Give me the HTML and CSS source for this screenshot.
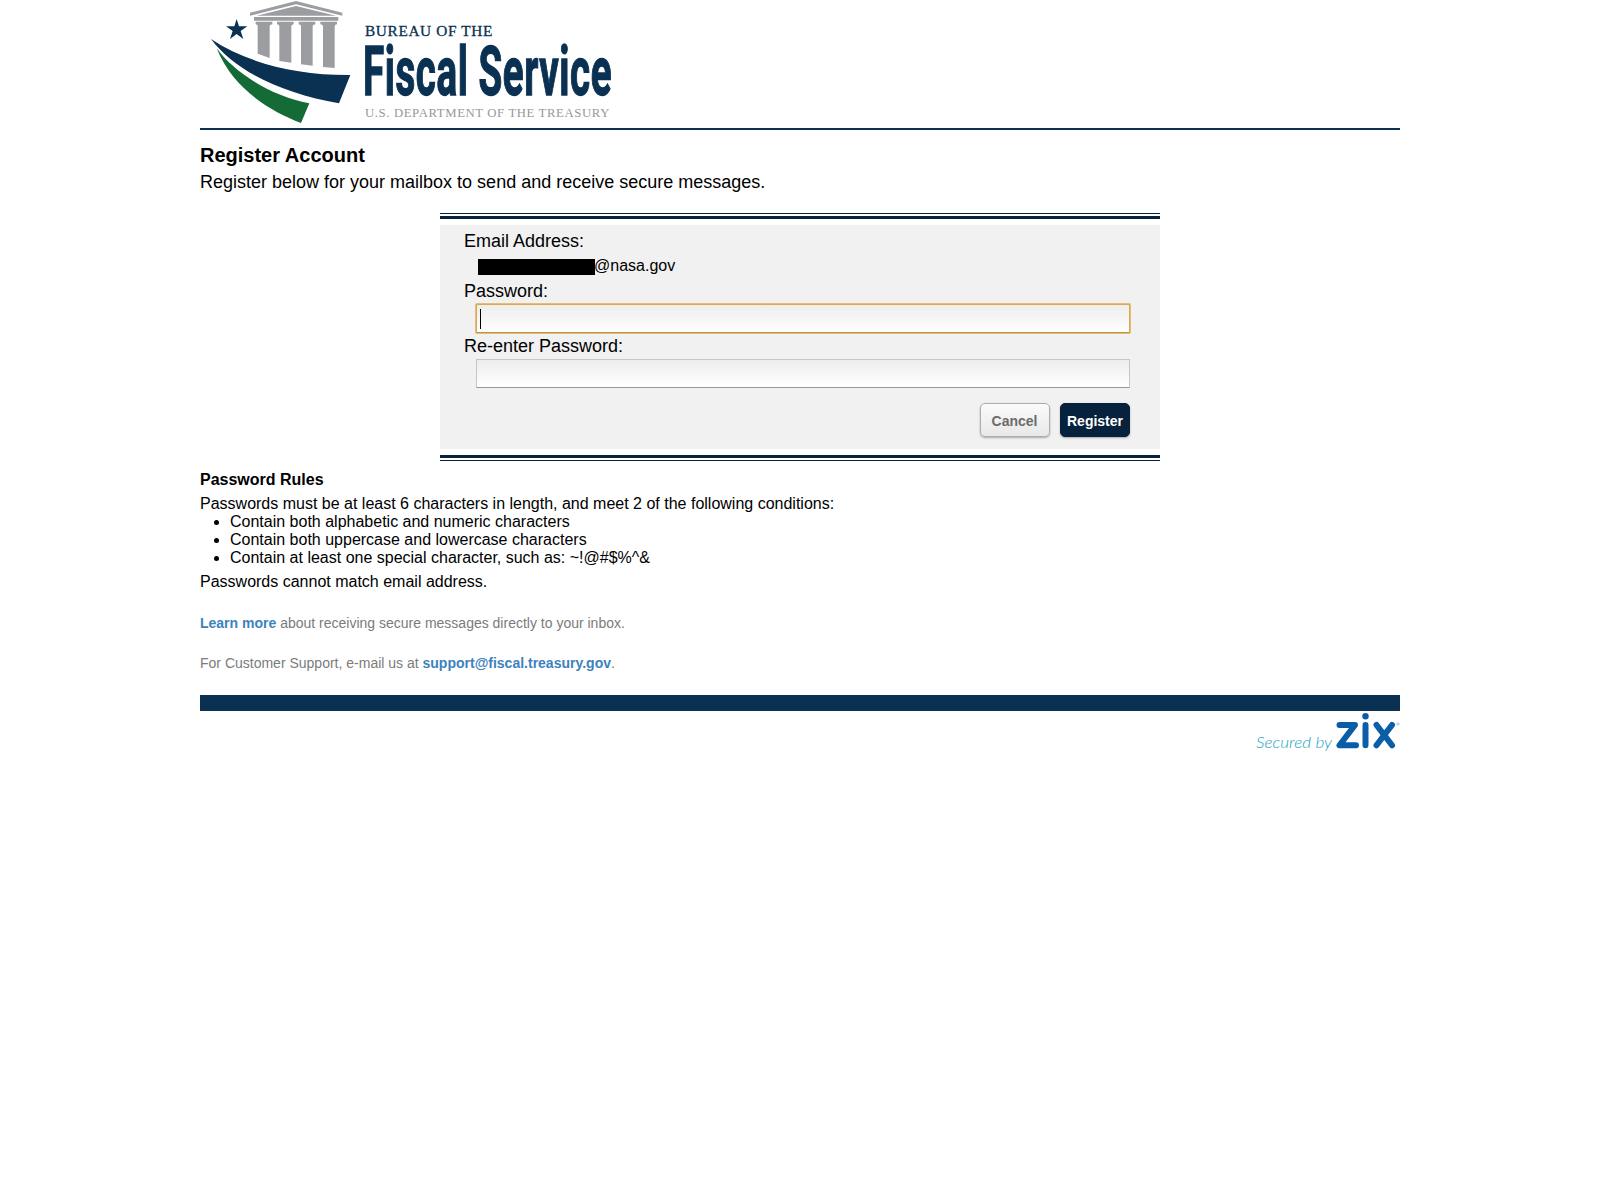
FILE: index.html
```html
<!DOCTYPE html>
<html lang="en">
<head>
<meta charset="utf-8">
<title>Register Account</title>
<link rel="stylesheet" href="styles.css">
</head>
<body>
<div class="page">
  <header class="header">
    <svg class="logo" width="420" height="128" viewBox="0 0 420 128" role="img" aria-label="Bureau of the Fiscal Service">
      <g transform="translate(-4 0) scale(.33333)">
        <g fill="#9b9da0">
          <path d="M162 38 300 3l139 35v9L300 13 162 47Z"/>
          <path d="M182 47 300 18l120 29Z"/>
          <path d="M174 51h253v11H174Z"/>
          <path d="M179 65h50v8q-7 0-8 5v96l-36-13V78q-1-5-6-5Z"/>
          <path d="M243 65h50v8q-6 0-7 5v110l-36-5V78q-1-5-7-5Z"/>
          <path d="M308 65h50v8q-7 0-8 5v119l-35-4V78q-1-5-7-5Z"/>
          <path d="M373 65h50v8q-6 0-7 5v126l-35-3V78q-1-5-8-5Z"/>
        </g>
        <path fill="#0a3052" d="m122 57 7 22h25l-20 14 8 24-20-15-20 15 8-24-20-14h25Z"/>
        <path fill="#0a3052" d="M45 117C155 190 300 226 463 225L429 310C265 280 120 218 45 117Z"/>
        <path fill="#146b35" d="M62 145C115 218 225 288 340 310L315 369C220 333 110 265 62 145Z"/>
      </g>
      <text class="logo-bureau" x="165" y="36" textLength="128" lengthAdjust="spacingAndGlyphs">BUREAU OF THE</text>
      <text class="logo-name" x="163" y="94.500" textLength="249" lengthAdjust="spacingAndGlyphs">Fiscal Service</text>
      <text class="logo-dept" x="165" y="116.500" textLength="245" lengthAdjust="spacingAndGlyphs">U.S. DEPARTMENT OF THE TREASURY</text>
    </svg>
  </header>

  <main>
    <h1 class="title">Register Account</h1>
    <p class="intro">Register below for your mailbox to send and receive secure messages.</p>

    <form class="form">
      <div class="panel">
        <div class="label">Email Address:</div>
        <div class="email"><span class="redacted"></span>@nasa.gov</div>
        <div class="label">Password:</div>
        <div class="field field-focus"><span class="caret"></span></div>
        <div class="label">Re-enter Password:</div>
        <div class="field"></div>
        <div class="actions">
          <button type="button" class="button button-cancel">Cancel</button>
          <button type="button" class="button button-register">Register</button>
        </div>
      </div>
    </form>

    <section class="rules">
      <h2 class="rules-title">Password Rules</h2>
      <p>Passwords must be at least 6 characters in length, and meet 2 of the following conditions:</p>
      <ul class="rules-list">
        <li>Contain both alphabetic and numeric characters</li>
        <li>Contain both uppercase and lowercase characters</li>
        <li>Contain at least one special character, such as: ~!@#$%^&amp;</li>
      </ul>
      <p>Passwords cannot match email address.</p>
    </section>

    <div class="help">
      <p><a class="link">Learn more</a> about receiving secure messages directly to your inbox.</p>
      <p>For Customer Support, e-mail us at <a class="link">support@fiscal.treasury.gov</a>.</p>
    </div>
  </main>

  <footer class="footer">
    <svg class="zix" width="150" height="44" viewBox="0 0 150 44" role="img" aria-label="Secured by zix">
      <text class="zix-secured" x="6" y="37" textLength="76" lengthAdjust="spacingAndGlyphs">Secured by</text>
      <g fill="none" stroke="#0a5ea8" stroke-width="6" stroke-linecap="round" stroke-linejoin="round">
        <path d="M89.500 14h15.500L89.500 34.300h16.500M115.500 14v20.300M126.500 14l15.500 20.300M142 14 126.500 34.300"/>
      </g>
      <circle cx="115.500" cy="5.200" r="3.200" fill="#0a5ea8"/>
      <circle cx="148" cy="13" r="1.200" fill="none" stroke="#6da3cf" stroke-width=".6"/>
    </svg>
  </footer>
</div>
</body>
</html>
```
FILE: styles.css
```css
* { box-sizing: border-box; }

body {
  margin: 0;
  background: #fff;
  color: #000;
  font: 16px/18px "Liberation Sans", Arial, sans-serif;
}

h1, h2, p, ul { margin: 0; padding: 0; }

.page { width: 1200px; margin: 0 auto; }

.header { height: 130px; border-bottom: 2px solid #0a3052; }
.logo { display: block; overflow: visible; }
.logo-bureau {
  font: 14.5px "Liberation Serif", serif;
  letter-spacing: .6px;
  fill: #0a3052;
  stroke: #0a3052;
  stroke-width: .3px;
}
.logo-name {
  font: bold 69px Roboto, sans-serif;
  letter-spacing: 1px;
  fill: #0a3052;
  stroke: #0a3052;
  stroke-width: 1.4px;
}
.logo-dept { font: 12.5px "Liberation Serif", serif; letter-spacing: .6px; fill: #96989b; }

.title { padding-top: 11px; font-size: 20px; line-height: 28px; }
.intro { font-size: 18px; line-height: 26px; }

.form {
  width: 720px;
  margin: 18px auto 0;
  padding: 2px 0;
  border-top: 1px solid #06223c;
  border-bottom: 1px solid #06223c;
}
.panel {
  padding: 9px 30px 18px 24px;
  border-top: 3px solid #06223c;
  border-bottom: 3px solid #06223c;
  background: #f1f1f1;
  box-shadow: inset 0 6px #fff, inset 0 -6px #fff;
}
.label { font-size: 18px; line-height: 26px; }
.email { display: flex; align-items: center; height: 24px; padding-left: 14px; line-height: 24px; }
.redacted { width: 117px; height: 16px; margin: 2px -1px 0 0; background: #000; }
.field {
  height: 29px;
  margin-left: 12px;
  border: 1px solid #c6c6c6;
  border-bottom-color: #989898;
  background: linear-gradient(#ededed, #fff);
}
.field-focus {
  padding: 4px 3px;
  border-color: #d8a951;
  border-bottom-color: #bf9142;
  border-radius: 1px;
  box-shadow: 0 0 0 1px #e6bd72;
}
.caret { display: block; width: 1px; height: 20px; background: #000; }
.actions { display: flex; justify-content: flex-end; gap: 10px; margin-top: 15px; }
.button {
  width: 70px;
  height: 34px;
  padding: 2px 0 0;
  border: 1px solid #06223c;
  border-radius: 5px;
  font: bold 14px "Liberation Sans", Arial, sans-serif;
  box-shadow: 0 1px 2px rgba(0, 0, 0, .3);
}
.button-cancel {
  padding-right: 1px;
  border-color: #adadad;
  background: linear-gradient(#fbfbfb, #e8e8e8);
  color: #6b6b6b;
}
.button-register { background: #06223c; color: #fff; }

.rules { padding-top: 7px; }
.rules-title { margin-bottom: 3px; font-size: 16px; line-height: 24px; }
.rules-list { margin-bottom: 6px; padding-left: 30px; }

.help {
  display: flex;
  flex-direction: column;
  gap: 20px;
  padding: 22px 0;
  color: #7b7b7b;
  font-size: 14px;
  line-height: 20px;
}
.link { color: #3d82bd; font-weight: bold; }

.footer { display: flex; justify-content: flex-end; border-top: 16px solid #0a3052; }
.zix { display: block; }
.zix-secured { font: italic 300 15.5px Lato, sans-serif; fill: #1c9fc2; }
```
